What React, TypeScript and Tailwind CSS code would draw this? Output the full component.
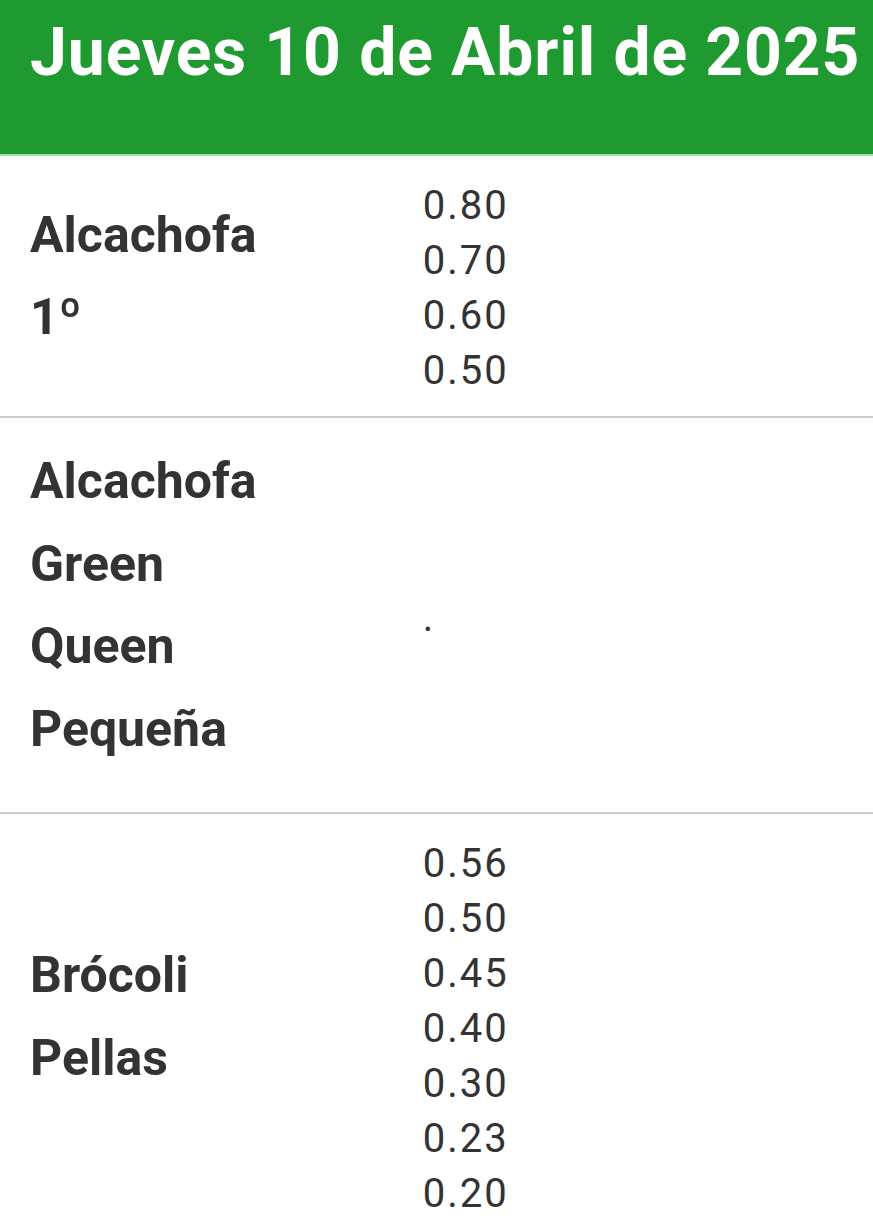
import React from 'react';

const rows = [
  { id: 1, name: ['Alcachofa', '1º'], prices: ['0.80', '0.70', '0.60', '0.50'] },
  { id: 2, name: ['Alcachofa', 'Green', 'Queen', 'Pequeña'], prices: ['.'] },
  { id: 3, name: ['Brócoli', 'Pellas'], prices: ['0.56', '0.50', '0.45', '0.40', '0.30', '0.23', '0.20'] },
];

const App = () => {
  return (
    <div className="min-h-screen bg-white text-[#333333] font-['Roboto',_'Liberation_Sans',_sans-serif]">
      <div className="h-[156px] bg-[#1f9a30] border-b-2 border-[#a8d9b0] px-[30px] pt-[14px]">
        <h1 className="text-[66px] leading-[77px] font-bold text-white whitespace-nowrap tracking-[0.9px]">
          Jueves 10 de Abril de 2025
        </h1>
      </div>

      <div>
        {rows.map((row, i) => (
          <div
            key={row.id}
            className={`flex items-center ${i < rows.length - 1 ? 'border-b-2 border-[#cccccc]' : ''}`}
          >
            <div className="w-[45%] px-[30px] pt-[22px] pb-[42px]">
              {row.name.map((n) => (
                <div key={n} className="text-[50px] leading-[82.5px] font-bold">
                  {n}
                </div>
              ))}
            </div>
            <div className="flex-1 px-[30px] pt-[22px] pb-[18px]">
              {row.prices.map((p, j) => (
                <div key={j} className="text-[40px] leading-[55px] tracking-[2px]">
                  {p}
                </div>
              ))}
            </div>
          </div>
        ))}
      </div>
    </div>
  );
};

export default App;
